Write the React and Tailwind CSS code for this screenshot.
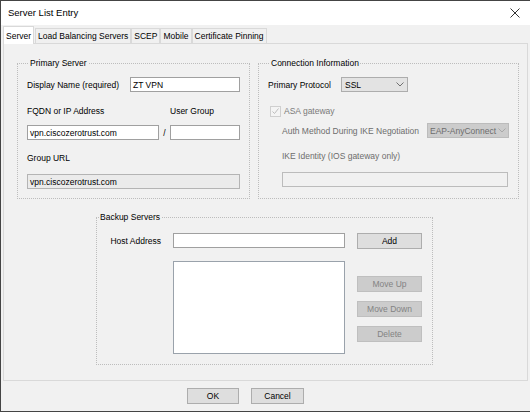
import React from "react";

const F = "font-['Liberation_Sans',Arial,sans-serif]";

function Chevron({ color = "#606060" }) {
  return (
    <svg width="8" height="5" viewBox="0 0 8 5" className="shrink-0">
      <polyline points="0.5,0.5 4,4 7.5,0.5" fill="none" stroke={color} strokeWidth="1" />
    </svg>
  );
}

function Tab({ label, active }) {
  if (active) {
    return (
      <div className="relative z-10 h-[18px] -mb-px bg-white border border-b-0 border-[#d9d9d9] px-[2px] flex items-center text-black">
        {label}
      </div>
    );
  }
  return (
    <div className="h-[15px] bg-[#f0f0f0] border border-b-0 border-[#d9d9d9] px-[2px] flex items-center text-black whitespace-nowrap">
      {label}
    </div>
  );
}

export default function App() {
  return (
    <div className={`${F} w-[530px] h-[412px] bg-[#f1f1f1] border-t border-l border-b border-[#444444] flex flex-col overflow-hidden text-[8.5px] leading-[12px] text-black`}>
      {/* title bar */}
      <div className="h-[24px] bg-white flex items-center justify-between pl-[7px] pr-[10px] shrink-0">
        <span className="text-[9.5px] text-black">Server List Entry</span>
        <svg width="10" height="10" viewBox="0 0 10 10">
          <line x1="0.5" y1="0.5" x2="9.5" y2="9.5" stroke="#333" strokeWidth="1" />
          <line x1="9.5" y1="0.5" x2="0.5" y2="9.5" stroke="#333" strokeWidth="1" />
        </svg>
      </div>

      {/* tabs */}
      <div className="h-[18px] pl-[2px] flex items-end shrink-0">
        <Tab label="Server" active />
        <div className="w-[1px]" />
        <Tab label="Load Balancing Servers" />
        <Tab label="SCEP" />
        <Tab label="Mobile" />
        <Tab label="Certificate Pinning" />
      </div>

      {/* tab page */}
      <div className="mx-[2px] h-[338px] border border-[#d9d9d9] bg-[#f1f1f1] pl-[13px] pt-[13px] shrink-0">
        <div className="flex gap-[8px]">
          {/* Primary Server */}
          <fieldset className="w-[233px] h-[142px] border border-dotted border-[#bdbdbd] px-[9px]">
            <legend className="ml-[2px] px-[1px]">Primary Server</legend>
            <div className="mt-[8px] h-[15px] flex items-center">
              <div className="w-[103px]">Display Name (required)</div>
              <div className="w-[110px] h-[15px] bg-white border border-[#a0a0a0] px-[2px] flex items-center">ZT VPN</div>
            </div>
            <div className="mt-[13px] h-[12px] flex items-center">
              <div className="w-[143px]">FQDN or IP Address</div>
              <div>User Group</div>
            </div>
            <div className="mt-[8px] h-[15px] flex items-center">
              <div className="w-[132px] h-[15px] bg-white border border-[#a0a0a0] px-[2px] flex items-center">vpn.ciscozerotrust.com</div>
              <div className="w-[11px] text-center">/</div>
              <div className="w-[70px] h-[15px] bg-white border border-[#a0a0a0]" />
            </div>
            <div className="mt-[12px] h-[12px] flex items-center">Group URL</div>
            <div className="mt-[10px] h-[15px] bg-[#ebebeb] border border-[#b4b4b4] px-[2px] flex items-center">vpn.ciscozerotrust.com</div>
          </fieldset>

          {/* Connection Information */}
          <fieldset className="w-[261px] h-[142px] border border-dotted border-[#bdbdbd] px-[9px]">
            <legend className="ml-[2px] px-[1px]">Connection Information</legend>
            <div className="mt-[8px] h-[15px] flex items-center">
              <div className="w-[73px]">Primary Protocol</div>
              <div className="w-[67px] h-[15px] bg-[#e3e3e3] border border-[#adadad] pl-[3px] pr-[3px] flex items-center justify-between">
                <span>SSL</span>
                <Chevron color="#707070" />
              </div>
            </div>
            <div className="mt-[13px] h-[12px] pl-[2px] flex items-center gap-[3px] text-[#7a7a7a]">
              <div className="w-[11px] h-[11px] border border-[#cfcfcf] bg-[#f4f4f4] flex items-center justify-center">
                <svg width="9" height="9" viewBox="0 0 9 9">
                  <polyline points="1.5,4.5 3.5,6.5 7.5,1.5" fill="none" stroke="#bdbdbd" strokeWidth="1" />
                </svg>
              </div>
              <span>ASA gateway</span>
            </div>
            <div className="mt-[6px] h-[15px] pl-[14px] flex items-center">
              <div className="w-[145px] text-[#6d6d6d] whitespace-nowrap">Auth Method During IKE Negotiation</div>
              <div className="w-[82px] h-[15px] bg-[#cccccc] border border-[#bcbcbc] pl-[2px] pr-[2px] flex items-center justify-between text-[#6d6d6d] whitespace-nowrap overflow-hidden">
                <span>EAP-AnyConnect</span>
                <Chevron color="#a8a8a8" />
              </div>
            </div>
            <div className="mt-[12px] h-[12px] pl-[14px] flex items-center text-[#6d6d6d]">IKE Identity (IOS gateway only)</div>
            <div className="mt-[10px] ml-[14px] w-[226px] h-[15px] bg-[#f1f1f1] border border-[#bcbcbc]" />
          </fieldset>
        </div>

        {/* Backup Servers */}
        <fieldset className="mt-[12px] ml-[79px] w-[337px] h-[154px] border border-dotted border-[#bdbdbd]">
          <legend className="ml-[2px] px-[1px]">Backup Servers</legend>
          <div className="mt-[10px] h-[16px] flex items-start">
            <div className="w-[76px] h-[15px] pr-[12px] flex items-center justify-end">Host Address</div>
            <div className="w-[172px] h-[15px] bg-white border border-[#a0a0a0]" />
            <div className="ml-[12px] w-[65px] h-[16px] bg-[#dedede] border border-[#adadad] flex items-center justify-center">Add</div>
          </div>
          <div className="mt-[12px] flex items-start">
            <div className="ml-[76px] w-[172px] h-[93px] bg-white border border-[#9aa2ab]" />
            <div className="ml-[12px] flex flex-col">
              <div className="mt-[15px] w-[65px] h-[16px] bg-[#cccccc] border border-[#bfbfbf] text-[#838383] flex items-center justify-center">Move Up</div>
              <div className="mt-[9px] w-[65px] h-[16px] bg-[#cccccc] border border-[#bfbfbf] text-[#838383] flex items-center justify-center">Move Down</div>
              <div className="mt-[9px] w-[65px] h-[16px] bg-[#cccccc] border border-[#bfbfbf] text-[#838383] flex items-center justify-center">Delete</div>
            </div>
          </div>
        </fieldset>
      </div>

      {/* dialog buttons */}
      <div className="mt-[7px] ml-[186px] flex gap-[12px]">
        <div className="w-[52px] h-[16px] bg-[#dedede] border border-[#adadad] flex items-center justify-center">OK</div>
        <div className="w-[53px] h-[16px] bg-[#dedede] border border-[#adadad] flex items-center justify-center">Cancel</div>
      </div>
    </div>
  );
}
